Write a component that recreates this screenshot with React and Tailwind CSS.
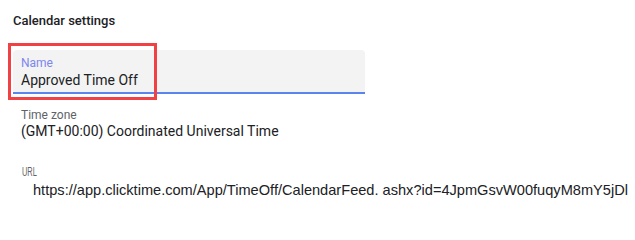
export default function App() {
  return (
    <div className="w-[635px] h-[205px] bg-white overflow-hidden relative" style={{ fontFamily: 'Roboto, "Liberation Sans", sans-serif' }}>
      <div className="pl-[13px] pt-[11px]">
        <div className="text-[13px] leading-[20px] font-medium text-[#202124]">Calendar settings</div>
        <div className="relative mt-[19px] w-[352px] h-[44px] bg-[#f3f3f3] rounded-t-[4px] border-b-2 border-[#5a84ee]">
          <div className="pl-[8px] pt-[5px] text-[12px] leading-[16px] text-[#7d86ee]">Name</div>
          <div className="pl-[8px] text-[14px] leading-[18px] text-[#202124]">Approved Time Off</div>
          <div className="absolute left-[-5px] top-[-7px] w-[149px] h-[57px] border-[3px] border-[#f04245] pointer-events-none" />
        </div>
        <div className="pl-[8px] mt-[14px] text-[12px] leading-[14px] text-[#5f6368]">Time zone</div>
        <div className="pl-[8px] text-[14px] leading-[18px] text-[#202124]">(GMT+00:00) Coordinated Universal Time</div>
        <div className="pl-[9px] mt-[23px] leading-[15px] text-[#5f6368]">
          <span className="inline-block text-[12px] leading-[15px] origin-left scale-x-[0.62]" style={{ fontFamily: '"Liberation Sans", Arial, sans-serif' }}>URL</span>
        </div>
        <div className="pl-[20px] mt-[1px] text-[14.6px] leading-[18px] text-[#202124] whitespace-nowrap" style={{ fontFamily: '"Liberation Sans", Arial, sans-serif' }}>
          https://app.clicktime.com/App/TimeOff/CalendarFeed. ashx?id=4JpmGsvW00fuqyM8mY5jDl
        </div>
      </div>
    </div>
  );
}
